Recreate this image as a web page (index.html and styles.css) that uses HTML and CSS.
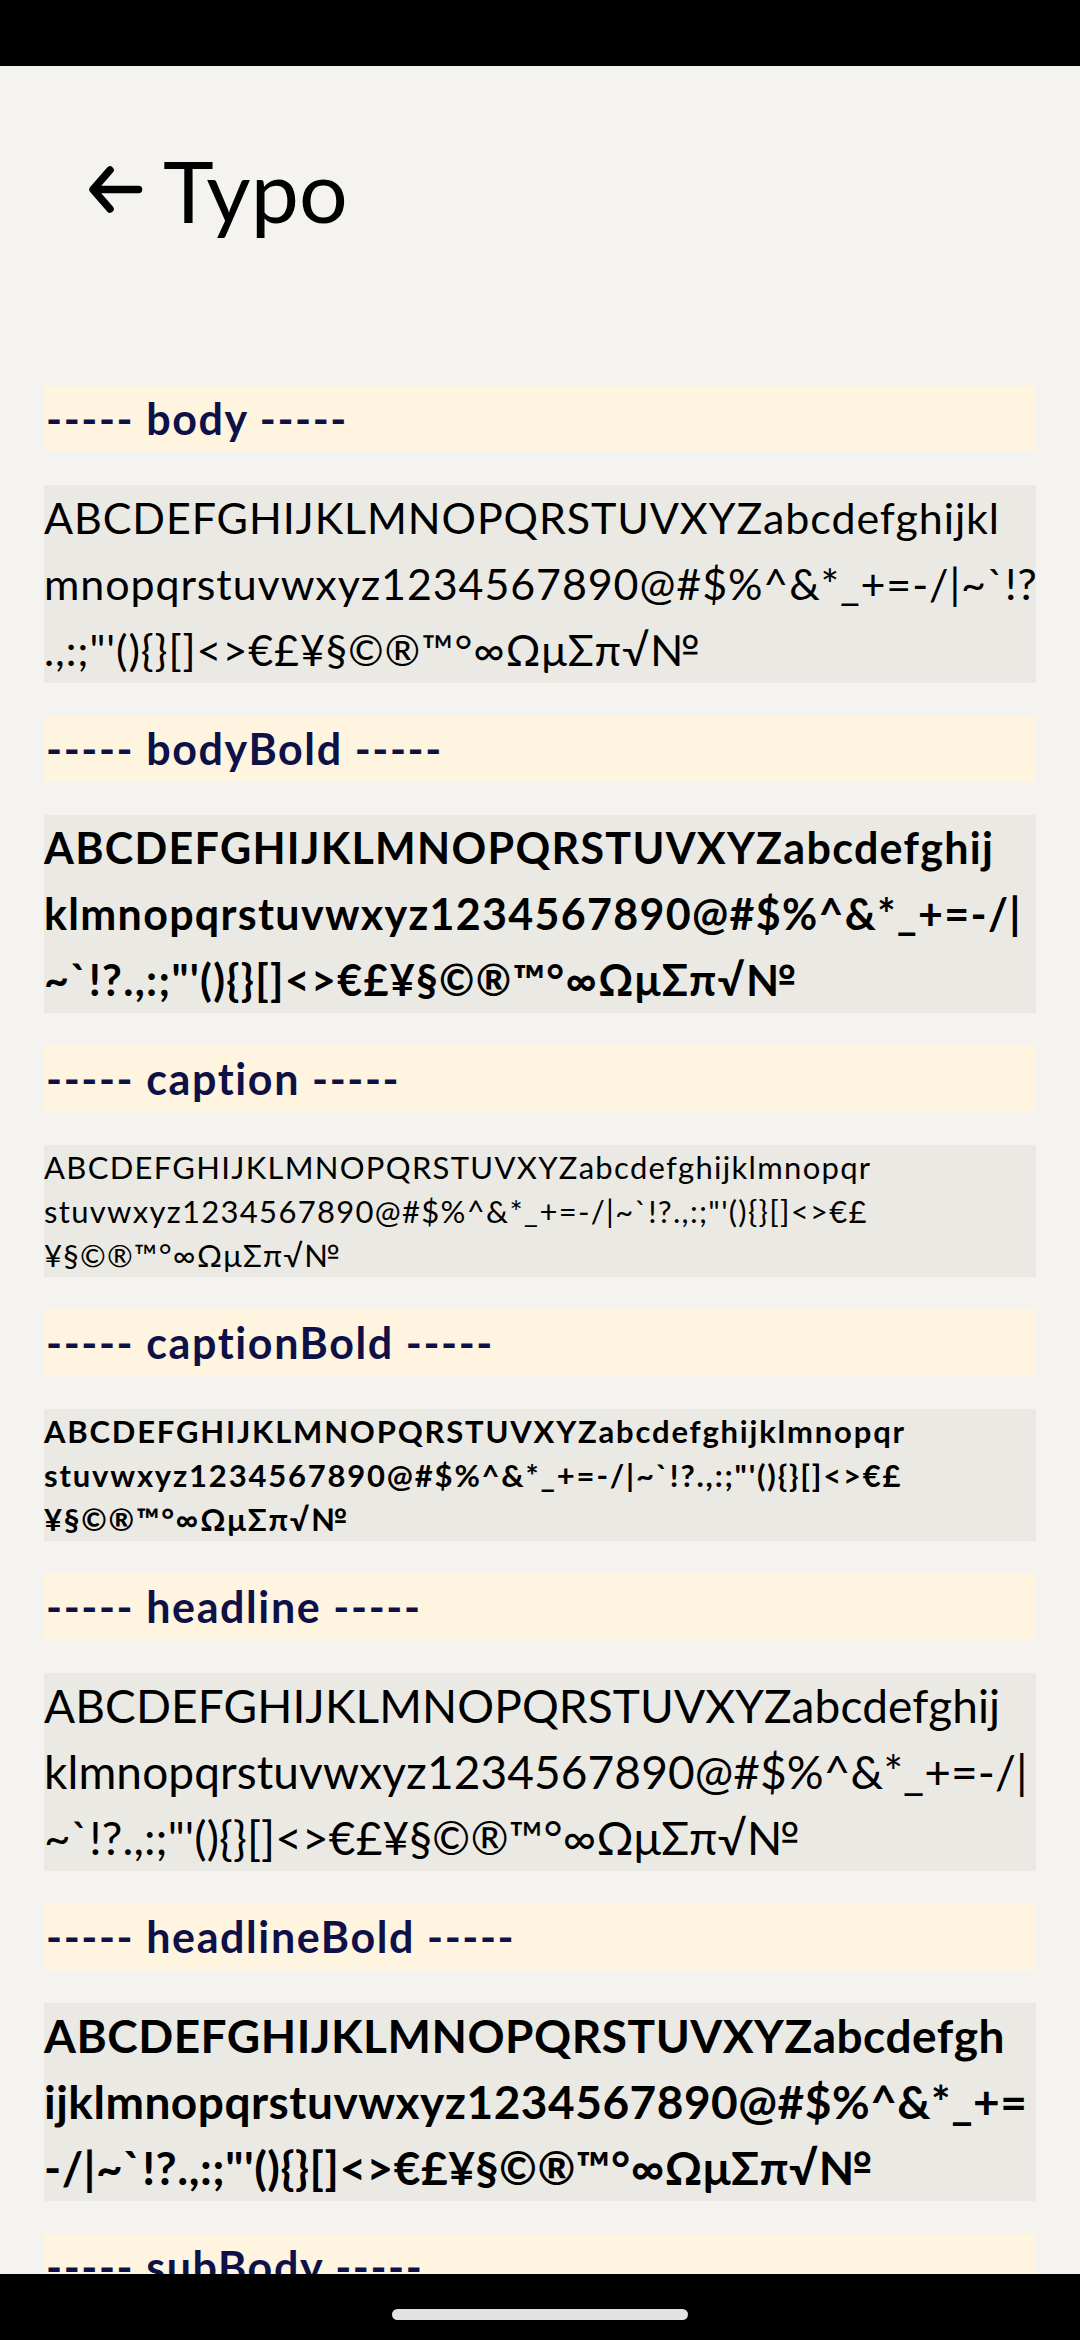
FILE: index.html
```html
<!DOCTYPE html>
<html lang="en">
<head>
<meta charset="utf-8">
<meta name="viewport" content="width=1080">
<title>Typo</title>
<link rel="stylesheet" href="styles.css">
</head>
<body>
<div class="status-bar"></div>
<header class="toolbar">
  <svg class="back" width="60" height="58" viewBox="0 0 60 58" aria-hidden="true">
    <path d="M52.5 28.5H8M24 9L7 28.5L24 48" fill="none" stroke="#000" stroke-width="7.5" stroke-linecap="round" stroke-linejoin="round"/>
  </svg>
  <h1 class="title">Typo</h1>
</header>
<main class="list">
  <div class="label">----- body -----</div>
  <div class="sample body">ABCDEFGHIJKLMNOPQRSTUVXYZabcdefghijkl<br>mnopqrstuvwxyz1234567890@#$%^&amp;*_+=-/|~`!?<br>.,:;"'(){}[]&lt;&gt;€£¥§©®™°∞ΩμΣπ√№</div>

  <div class="label">----- bodyBold -----</div>
  <div class="sample body bold">ABCDEFGHIJKLMNOPQRSTUVXYZabcdefghij<br>klmnopqrstuvwxyz1234567890@#$%^&amp;*_+=-/|<br>~`!?.,:;"'(){}[]&lt;&gt;€£¥§©®™°∞ΩμΣπ√№</div>

  <div class="label">----- caption -----</div>
  <div class="sample caption">ABCDEFGHIJKLMNOPQRSTUVXYZabcdefghijklmnopqr<br>stuvwxyz1234567890@#$%^&amp;*_+=-/|~`!?.,:;"'(){}[]&lt;&gt;€£<br>¥§©®™°∞ΩμΣπ√№</div>

  <div class="label">----- captionBold -----</div>
  <div class="sample caption bold">ABCDEFGHIJKLMNOPQRSTUVXYZabcdefghijklmnopqr<br>stuvwxyz1234567890@#$%^&amp;*_+=-/|~`!?.,:;"'(){}[]&lt;&gt;€£<br>¥§©®™°∞ΩμΣπ√№</div>

  <div class="label">----- headline -----</div>
  <div class="sample headline">ABCDEFGHIJKLMNOPQRSTUVXYZabcdefghij<br>klmnopqrstuvwxyz1234567890@#$%^&amp;*_+=-/|<br>~`!?.,:;"'(){}[]&lt;&gt;€£¥§©®™°∞ΩμΣπ√№</div>

  <div class="label">----- headlineBold -----</div>
  <div class="sample headline bold">ABCDEFGHIJKLMNOPQRSTUVXYZabcdefgh<br>ijklmnopqrstuvwxyz1234567890@#$%^&amp;*_+=<br>-/|~`!?.,:;"'(){}[]&lt;&gt;€£¥§©®™°∞ΩμΣπ√№</div>

  <div class="label">----- subBody -----</div>
</main>
<nav class="nav-bar"><span class="pill"></span></nav>
</body>
</html>
```
FILE: styles.css
```css
* { box-sizing: border-box; }
html, body {
  margin: 0;
  padding: 0;
}
body {
  width: 1080px;
  height: 2340px;
  overflow: hidden;
  background: #f4f3ef;
  font-family: Lato, "Noto Sans", "DejaVu Sans", sans-serif;
  color: #000;
}
.status-bar {
  height: 66px;
  background: #000;
}
.toolbar {
  height: 248px;
  display: flex;
  align-items: center;
  padding-left: 86px;
  gap: 17px;
}
.back { display: block; flex: none; }
.title {
  margin: 0;
  font-size: 86px;
  font-weight: 400;
  line-height: 1;
}
.list {
  padding: 72px 44px 0;
  display: flex;
  flex-direction: column;
  gap: 33px;
}
.label {
  height: 66px;
  background: #fff4e0;
  color: #0d1147;
  font-weight: 700;
  font-size: 43px;
  line-height: 66px;
  letter-spacing: 1.6px;
  white-space: nowrap;
  padding-left: 2px;
}
.sample {
  background: #eae9e4;
  white-space: nowrap;
}
.body {
  font-size: 43px;
  line-height: 66px;
  letter-spacing: 0.9px;
}
.body.bold { letter-spacing: 1.3px; }
.caption {
  font-size: 31px;
  line-height: 44px;
  letter-spacing: 1.3px;
}
.caption.bold { letter-spacing: 1.8px; }
.headline {
  font-size: 46px;
  line-height: 66px;
  letter-spacing: 0.1px;
}
.headline.bold { letter-spacing: 0.5px; }
.bold { font-weight: 700; }
.nav-bar {
  position: fixed;
  left: 0;
  right: 0;
  bottom: 0;
  height: 66px;
  background: #000;
  display: flex;
  justify-content: center;
  padding-top: 35px;
}
.pill {
  width: 296px;
  height: 11px;
  border-radius: 6px;
  background: #e2e2e2;
}
```
